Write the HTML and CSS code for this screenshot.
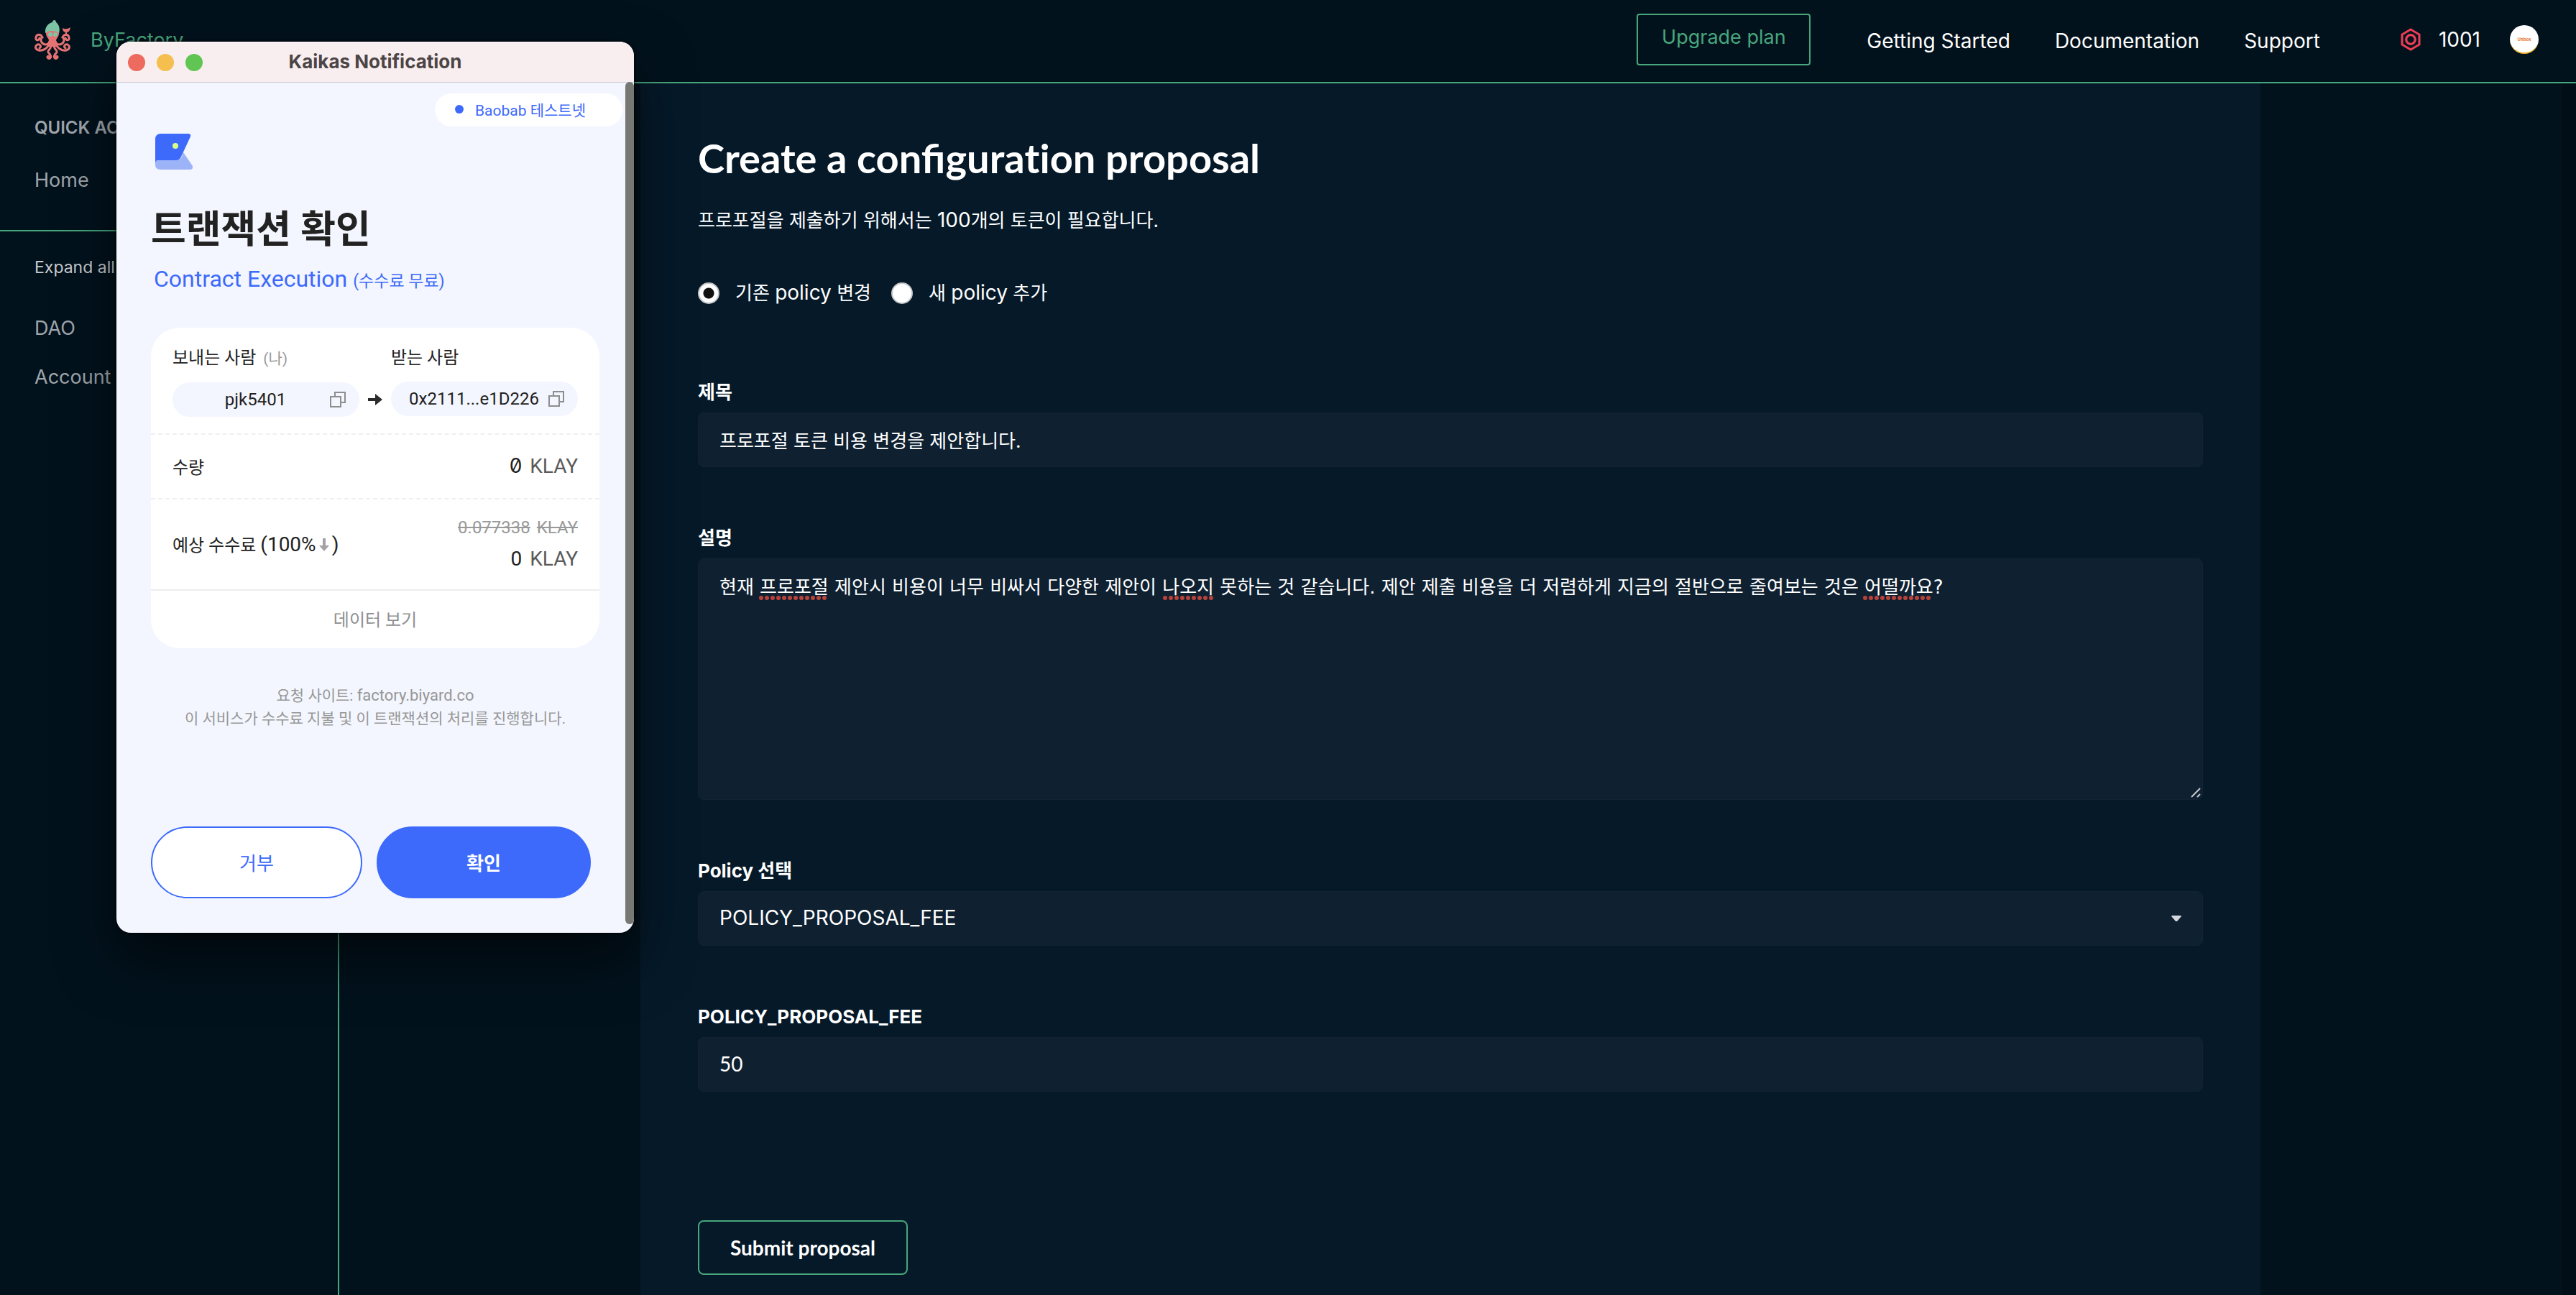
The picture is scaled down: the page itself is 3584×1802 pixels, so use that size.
FILE: index.html
```html
<!DOCTYPE html>
<html lang="ko">
<head>
<meta charset="utf-8">
<title>ByFactory</title>
<link rel="stylesheet" href="styles.css">
</head>
<body>
<div class="app">
  <header class="topbar">
    <a class="brand" href="#">
      <svg class="brand-logo" viewBox="0 0 50 56" aria-hidden="true">
        <g fill="none" stroke="#e57373" stroke-width="3" stroke-linecap="round">
          <path d="M21 31C19 36 13 36 10 32C8 29 9 26 11 25C9 20 3 20 2 25C1 30 6 30 7 26"/>
          <path d="M29 31C31 36 37 36 40 32C42 29 41 26 39 25C41 20 47 20 48 25C49 30 44 30 43 26"/>
          <path d="M21 33C18 41 11 44 6 43C1 42 0 37 4 35C8 34 10 38 7 40"/>
          <path d="M29 33C32 41 39 44 44 43C49 42 50 37 46 35C42 34 40 38 43 40"/>
          <path d="M23 36C23 43 16 43 20 47C25 51 22 56 19 54C16 52 20 50 20 52"/>
          <path d="M27 36C27 43 34 43 30 47C25 51 28 56 31 54C34 52 30 50 30 52"/>
        </g>
        <path fill="#e57373" d="M16 16H34C35 24 31 25 30 29L33 38H17L20 29C19 25 15 24 16 16Z"/>
        <path fill="#7cc4a4" d="M15 19C14 10 20 5 25 4C25 0 30 0 30 4C34 7 36 13 34 19C28 15 21 15 15 19Z"/>
        <circle cx="22" cy="21" r="3" fill="#7cc4a4"/><circle cx="29" cy="21" r="3" fill="#7cc4a4"/>
        <path fill="#e57373" d="M39 12Q44 15 50 11Q49 18 45 18V23H43V18Q39 17 39 12Z"/>
      </svg>
      <span>ByFactory</span>
    </a>
    <nav class="topnav">
      <button class="upgrade" type="button">Upgrade plan</button>
      <a href="#">Getting Started</a>
      <a href="#">Documentation</a>
      <a href="#">Support</a>
    </nav>
    <div class="account">
      <svg class="token" viewBox="0 0 28 32" aria-hidden="true">
        <path d="M14 2L26 9V23L14 30L2 23V9Z" fill="none" stroke="#ee3e55" stroke-width="3"/>
        <circle cx="14" cy="16" r="6.3" fill="none" stroke="#ee3e55" stroke-width="3.2"/>
      </svg>
      <span>1001</span>
      <span class="avatar">Unbox</span>
    </div>
  </header>
  <div class="body">
    <aside class="sidebar">
      <section class="quick">
        <h2>QUICK ACTIONS</h2>
        <a href="#">Home</a>
      </section>
      <section class="tree">
        <button class="expand" type="button">Expand all</button>
        <a href="#">DAO</a>
        <a href="#">Account</a>
      </section>
    </aside>
    <main class="main">
      <form class="panel">
        <h1>Create a configura<span>ti</span>on proposal</h1>
        <p class="lead">프로포절을 제출하기 위해서는 <b>100</b>개의 토큰이 필요합니다.</p>
        <div class="radios">
          <label><input type="radio" name="mode" checked><span>기존 <b>policy</b> 변경</span></label>
          <label><input type="radio" name="mode"><span>새 <b>policy</b> 추가</span></label>
        </div>
        <div class="field">
          <label for="title">제목</label>
          <input id="title" class="control" type="text" value="프로포절 토큰 비용 변경을 제안합니다.">
        </div>
        <div class="field">
          <label for="desc">설명</label>
          <div class="area">
            <textarea id="desc" class="control" spellcheck="false">현재 프로포절 제안시 비용이 너무 비싸서 다양한 제안이 나오지 못하는 것 같습니다. 제안 제출 비용을 더 저렴하게 지금의 절반으로 줄여보는 것은 어떨까요?</textarea>
            <svg class="spelling" width="1720" height="8" aria-hidden="true">
              <path d="M58 4H150M620 4H685M1594 4H1684" stroke="#b8433c" stroke-width="6" stroke-linecap="round" stroke-dasharray="0 8"/>
            </svg>
            <svg class="grip" viewBox="0 0 14 14" aria-hidden="true"><path d="M1 13L13 1M9 13L13 9" fill="none" stroke="#c6cacd" stroke-width="2"/></svg>
          </div>
        </div>
        <div class="field">
          <label for="policy">Policy 선택</label>
          <div class="pick">
            <select id="policy" class="control"><option>POLICY_PROPOSAL_FEE</option></select>
            <svg class="caret" viewBox="0 0 14 8" aria-hidden="true"><path d="M1 0H13L14 1L8 8H6L0 1Z" fill="#d3d6dc"/></svg>
          </div>
        </div>
        <div class="field">
          <label for="fee">POLICY_PROPOSAL_FEE</label>
          <input id="fee" class="control number" type="text" value="50">
        </div>
        <button class="submit" type="button">Submit proposal</button>
      </form>
    </main>
  </div>
</div>

<div class="window" role="dialog" aria-labelledby="window-title">
  <div class="titlebar">
    <div class="lights"><i class="red"></i><i class="yellow"></i><i class="green"></i></div>
    <h2 id="window-title">Kaikas Notification</h2>
  </div>
  <div class="wallet">
    <button class="network" type="button"><i></i>Baobab 테스트넷</button>
    <svg class="kaikas" viewBox="0 0 52 50" aria-hidden="true">
      <path fill="#9db3f8" d="M0 41Q0 37 4 37H30Q37 36 39 26L52 45Q53 50 48 50H7Q0 50 0 43Z"/>
      <path fill="#3d6afb" d="M8 0H46Q50 0 49 4L36 32Q34 37 29 37H4Q0 37 0 42V8Q0 0 8 0Z"/>
      <circle cx="28" cy="17" r="4" fill="#d9ff8a"/>
    </svg>
    <h3>트랜잭션 확인</h3>
    <p class="kind">Contract Execution <small>(수수료 무료)</small></p>
    <section class="card">
      <div class="parties">
        <div class="party">
          <span>보내는 사람 <small>(나)</small></span>
          <button class="address" type="button"><span>pjk5401</span>
            <svg viewBox="0 0 22 22" aria-hidden="true"><path d="M7 6V1H21V15H16M1 7H15V21H1Z" fill="none" stroke="#8e8e8e" stroke-width="2"/></svg>
          </button>
        </div>
        <svg class="arrow" viewBox="0 0 20 20" aria-hidden="true"><path d="M0 8H10V2L20 10L10 18V12H0Z" fill="#2b2b2b"/></svg>
        <div class="party">
          <span>받는 사람</span>
          <button class="address" type="button"><span>0x2111...e1D226</span>
            <svg viewBox="0 0 22 22" aria-hidden="true"><path d="M7 6V1H21V15H16M1 7H15V21H1Z" fill="none" stroke="#8e8e8e" stroke-width="2"/></svg>
          </button>
        </div>
      </div>
      <div class="row amount">
        <span>수량</span>
        <span class="klay"><b class="slashed">0</b> KLAY</span>
      </div>
      <div class="row fee">
        <span>예상 수수료 <b>(100%<svg viewBox="0 0 14 18" aria-hidden="true"><path d="M5 0H9V10H14L7 18L0 10H5Z" fill="#a3a3a3"/></svg>)</b></span>
        <span class="fees"><span class="old"><s>0.077338</s><s>KLAY</s></span><span class="klay"><b>0</b> KLAY</span></span>
      </div>
      <button class="data" type="button">데이터 보기</button>
    </section>
    <p class="origin">요청 사이트: <b>factory.biyard.co</b><br>이 서비스가 수수료 지불 및 이 트랜잭션의 처리를 진행합니다.</p>
    <div class="actions">
      <button class="reject" type="button">거부</button>
      <button class="confirm" type="button">확인</button>
    </div>
    <i class="scrollbar"></i>
  </div>
</div>
</body>
</html>
```
FILE: styles.css
```css
* { box-sizing: border-box; }
body, h1, h2, h3, p { margin: 0; }
body {
  background: #02121d;
  color: #fff;
  font-family: Inter, "Noto Sans CJK KR", sans-serif;
  font-size: 26px;
}
button, input, select, textarea { font: inherit; color: inherit; }
button { padding: 0; border: 0; background: none; }
a { color: inherit; text-decoration: none; }
b { font-weight: 400; }
i { display: block; }
svg { display: block; flex: none; }

.app { min-height: 100vh; display: flex; flex-direction: column; border-bottom: 1px solid #020619; }

.topbar {
  height: 116px;
  display: flex;
  align-items: center;
  padding: 0 52px 4px 48px;
  border-bottom: 2px solid #48a67c;
}
.brand { display: flex; align-items: center; gap: 28px; color: #48a67c; font-size: 27px; }
.brand-logo { width: 50px; height: 56px; }
.topnav { display: flex; align-items: center; gap: 62px; margin-left: auto; font-size: 28px; }
.topnav a { padding-top: 4px; }
.upgrade {
  width: 242px;
  height: 72px;
  margin-right: 16px;
  padding-bottom: 8px;
  border: 2px solid #48a67c;
  border-radius: 4px;
  color: #48a67c;
  font-size: 27px;
}
.account { display: flex; align-items: center; gap: 25px; margin-left: 112px; font-size: 28px; }
.token { width: 28px; height: 32px; }
.avatar {
  width: 40px;
  height: 40px;
  margin-left: 16px;
  border-radius: 50%;
  background: #fff;
  border-bottom: 2px solid #f0b429;
  color: #e8742c;
  font-size: 6px;
  font-weight: 700;
  line-height: 40px;
  text-align: center;
}

.body { flex: 1; display: flex; }
.sidebar { width: 472px; border-right: 2px solid #48a67c; color: #a0a6ac; }
.sidebar a { display: block; line-height: 32px; font-size: 27px; }
.quick { height: 206px; padding: 46px 48px; border-bottom: 2px solid #48a67c; }
.quick h2 { font-size: 24px; line-height: 32px; font-weight: 600; }
.quick a { margin-top: 41px; }
.tree { padding: 34px 48px; }
.expand { display: block; color: #c8ccd0; font-size: 23px; line-height: 32px; }
.tree a { margin-top: 36px; }
.tree .expand + a { margin-top: 53px; }

.main { flex: 1; padding: 0 419px; border-right: 20px solid #010e18; display: flex; }
.panel { flex: 1; padding: 64px 80px 28px; background: #051929; display: flex; flex-direction: column; }
.panel h1 { font: 700 56px/80px Lato, sans-serif; }
.panel h1 span { font-variant-ligatures: none; }
.lead { margin-top: 26px; line-height: 40px; }
.lead b { font-size: 28px; }
.radios { display: flex; gap: 28px; margin-top: 60px; line-height: 40px; }
.radios label { display: flex; align-items: center; gap: 22px; }
.radios b { font-size: 28px; }
.radios input {
  appearance: none;
  width: 30px;
  height: 30px;
  margin: 0;
  border: 2px solid #c4c6c8;
  border-radius: 50%;
  background: #fff;
}
.radios input:checked { background: radial-gradient(circle, #111 7px, #fff 8px); }
.field { display: flex; flex-direction: column; gap: 8px; margin-top: 88px; }
.radios + .field { margin-top: 98px; }
.field + .field { margin-top: 79px; }
.field label { font-size: 26px; font-weight: 700; line-height: 40px; }
.control {
  display: block;
  width: 100%;
  height: 76px;
  margin: 0;
  padding: 0 29px 2px;
  border: 1px solid #122432;
  border-radius: 8px;
  outline: 0;
  background: #0f2131;
}
select.control { appearance: none; font-size: 28px; }
.number { font: 28px Lato, sans-serif; }
.area, .pick { position: relative; }
textarea.control {
  height: 336px;
  padding: 19px 29px;
  font-family: "DejaVu Sans", "Noto Sans CJK KR", sans-serif;
  line-height: 40px;
}
textarea::-webkit-resizer { background: transparent; }
.spelling { position: absolute; left: 30px; top: 51px; }
.grip { position: absolute; right: 3px; bottom: 3px; width: 14px; height: 14px; pointer-events: none; }
.caret { position: absolute; right: 30px; top: 34px; width: 14px; height: 8px; }
.submit {
  width: 292px;
  height: 76px;
  margin-top: 179px;
  border: 2px solid #48a67c;
  border-radius: 8px;
  font: 700 28px Lato, sans-serif;
}

.window {
  position: absolute;
  left: 162px;
  top: 58px;
  width: 720px;
  height: 1240px;
  border-radius: 20px;
  overflow: hidden;
  background: #f3f6fe;
  color: #222;
  box-shadow: 0 36px 80px rgba(0, 0, 0, .6), 0 0 4px #000;
}
.titlebar {
  height: 57px;
  display: flex;
  align-items: center;
  padding: 0 16px;
  background: #f9eeef;
  border-top: 1px solid #fff;
  border-bottom: 1px solid #c9ccd6;
}
.lights { display: flex; gap: 16px; width: 104px; }
.lights i { width: 24px; height: 24px; border-radius: 50%; }
.red { background: #ed6a5e; }
.yellow { background: #f5bf4f; }
.green { background: #61c554; }
.titlebar h2 { flex: 1; margin-right: 104px; padding-bottom: 2px; color: #4b4546; font-size: 26px; line-height: 32px; text-align: center; }
.wallet {
  display: flex;
  flex-direction: column;
  padding: 15px 48px 48px;
  font-family: Roboto, "Noto Sans CJK KR", sans-serif;
  font-size: 24px;
}
.network {
  align-self: flex-end;
  display: flex;
  align-items: center;
  gap: 16px;
  width: 261px;
  height: 46px;
  margin-right: -32px;
  padding: 0 0 2px 28px;
  border-radius: 23px;
  background: #fff;
  color: #3d6afb;
  font-size: 21px;
}
.network i { width: 12px; height: 12px; border-radius: 50%; background: #3d6afb; }
.kaikas { width: 52px; height: 50px; margin: 10px 6px 0; }
.wallet h3 { margin-top: 44px; font-size: 53px; line-height: 80px; }
.kind { margin-top: 8px; padding-left: 4px; color: #3d6afb; font-size: 32px; line-height: 40px; }
.kind small { font-size: 23px; }
.card { width: 624px; margin-top: 44px; border-radius: 40px; background: #fff; overflow: hidden; }
.parties { height: 149px; display: flex; justify-content: space-between; padding: 24px 30px; border-bottom: 2px dashed #efefef; }
.party { width: 260px; }
.party > span { display: block; line-height: 36px; }
.party small { margin-left: 4px; color: #999; font-size: 21px; }
.address {
  display: flex;
  align-items: center;
  justify-content: space-between;
  width: 260px;
  height: 48px;
  margin-top: 15px;
  padding: 0 19px 0 24px;
  border-radius: 24px;
  background: #f3f6fe;
}
.address span { flex: 1; text-align: center; }
.address svg { width: 22px; height: 22px; margin-left: 12px; }
.arrow { width: 20px; height: 20px; margin-top: 66px; }
.row { display: flex; align-items: center; justify-content: space-between; padding: 0 30px 2px; }
.row svg { display: inline-block; width: 14px; height: 18px; margin: 0 4px; }
.amount { height: 90px; border-bottom: 2px dashed #efefef; }
.fee { height: 127px; border-bottom: 2px solid #ededed; }
.fee b { font-size: 28px; }
.klay { color: #5a5a5a; font-size: 28px; line-height: 44px; }
.klay b { margin-right: 4px; color: #222; font-size: 28px; }
.klay .slashed { font-family: Inter, sans-serif; font-feature-settings: "zero"; }
.fees { display: flex; flex-direction: column; align-items: flex-end; gap: 2px; }
.old { display: flex; gap: 9px; color: #999; line-height: 40px; }
.data { display: block; width: 100%; height: 80px; padding-bottom: 4px; color: #8f8f8f; }
.origin { width: 624px; margin-top: 50px; color: #979797; font-size: 21px; line-height: 32px; text-align: center; }
.origin b { font-size: 22px; }
.actions { display: flex; gap: 20px; margin-top: 134px; font-size: 26px; }
.actions button { width: 294px; height: 100px; padding-bottom: 2px; border: 2px solid #3d6afb; border-radius: 50px; background: #fff; color: #3d6afb; }
.actions .confirm { width: 298px; background: #3d6afb; color: #fff; font-weight: 700; }
.scrollbar { position: absolute; right: 0; top: 56px; width: 12px; height: 1172px; border-radius: 6px; background: #777874; }
```
